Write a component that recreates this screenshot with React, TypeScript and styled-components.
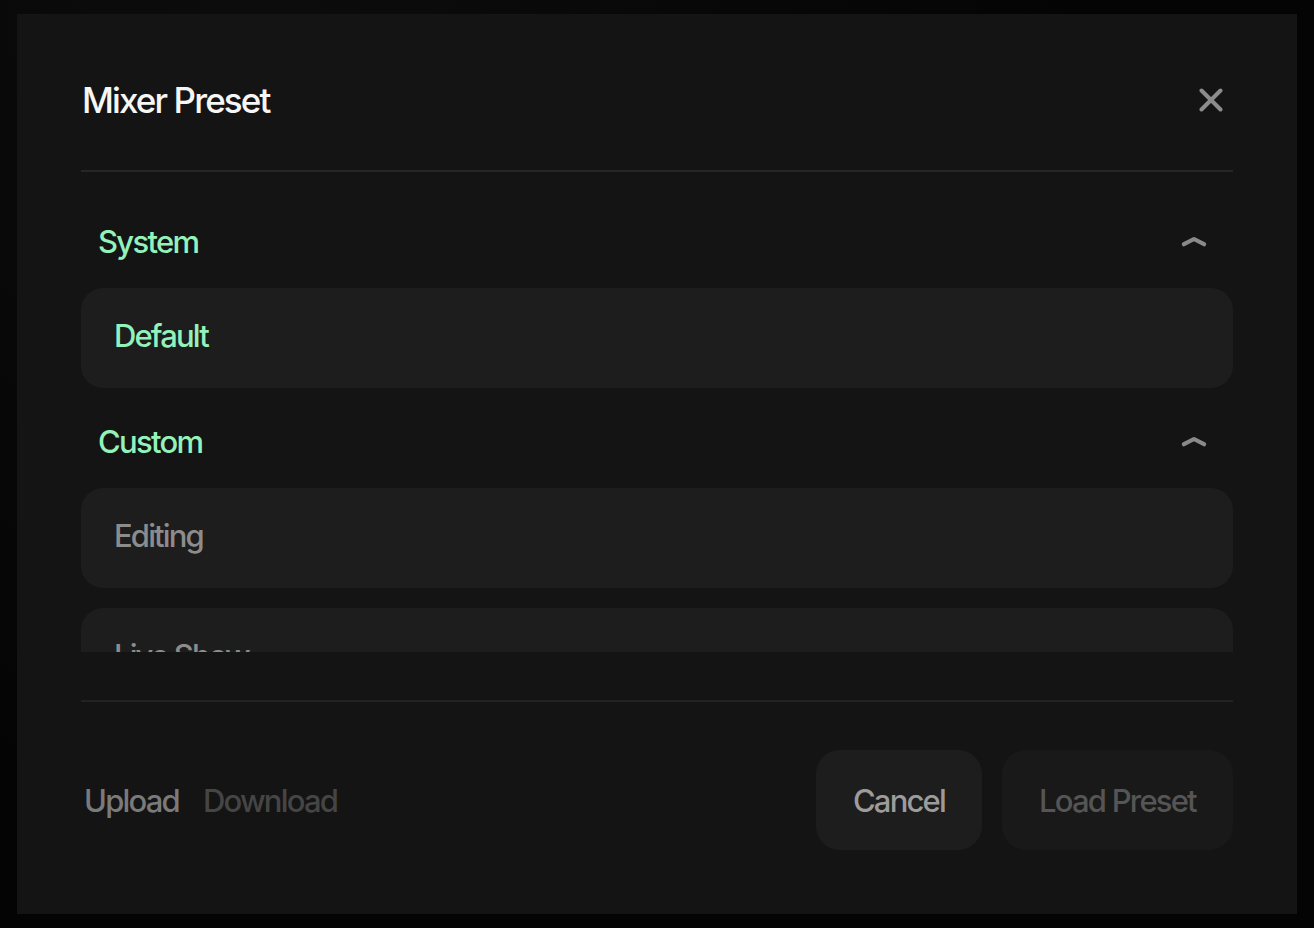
import styled, { createGlobalStyle } from "styled-components";

const GlobalStyle = createGlobalStyle`
  html, body {
    margin: 0;
    padding: 0;
    background: #050505;
    font-family: Inter, "Noto Sans", "Liberation Sans", sans-serif;
  }
  * { box-sizing: border-box; }
`;

type Preset = { name: string; active?: boolean };

const sections: { title: string; presets: Preset[] }[] = [
  { title: "System", presets: [{ name: "Default", active: true }] },
  { title: "Custom", presets: [{ name: "Editing" }, { name: "Live Show" }, { name: "Podcast" }] },
];

function CloseIcon() {
  return (
    <svg width="24" height="24" viewBox="0 0 24 24" fill="none">
      <path d="M2.5 2.5L21.5 21.5M21.5 2.5L2.5 21.5" stroke="#8c8c8c" strokeWidth="4" strokeLinecap="round" />
    </svg>
  );
}

function ChevronUp() {
  return (
    <svg width="26" height="11" viewBox="0 0 26 11" fill="none">
      <path d="M3 8.2L13 3L23 8.2" stroke="#8a8a8a" strokeWidth="4.2" strokeLinecap="round" strokeLinejoin="round" />
    </svg>
  );
}

export default function App() {
  return (
    <>
      <GlobalStyle />
      <Backdrop>
        <Dialog>
          <Header>
            <Title>Mixer Preset</Title>
            <IconButton aria-label="Close">
              <CloseIcon />
            </IconButton>
          </Header>

          <Body>
            <ScrollArea>
              {sections.map((section) => (
                <Section key={section.title}>
                  <SectionHeader>
                    <SectionTitle>{section.title}</SectionTitle>
                    <ChevronUp />
                  </SectionHeader>
                  <PresetList>
                    {section.presets.map((preset) => (
                      <PresetRow key={preset.name} $active={preset.active}>
                        {preset.name}
                      </PresetRow>
                    ))}
                  </PresetList>
                </Section>
              ))}
            </ScrollArea>
          </Body>

          <Footer>
            <FileActions>
              <TextButton $tone="#7a7a7a">Upload</TextButton>
              <TextButton $tone="#454545">Download</TextButton>
            </FileActions>
            <Actions>
              <Button $bg="#1d1d1d" $fg="#9c9c9c" $width={166}>
                Cancel
              </Button>
              <Button $bg="#191919" $fg="#555555" $width={231}>
                Load Preset
              </Button>
            </Actions>
          </Footer>
        </Dialog>
      </Backdrop>
    </>
  );
}

const Backdrop = styled.div`
  width: 1314px;
  height: 928px;
  padding: 14px 17px;
  background: radial-gradient(circle at 20% 0%, #0c0c0c 0%, #040404 60%);
`;

const Dialog = styled.div`
  width: 1280px;
  height: 900px;
  background: #141414;
  display: flex;
  flex-direction: column;
  padding: 0 64px;
`;

const Header = styled.div`
  display: flex;
  align-items: center;
  justify-content: space-between;
  padding: 56px 10px 40px 1px;
  border-bottom: 2px solid #262626;
`;

const Title = styled.h2`
  margin: 0;
  font-size: 35px;
  line-height: 60px;
  font-weight: 500;
  letter-spacing: -0.054em;
  color: #f6f6f6;
`;

const IconButton = styled.button`
  display: flex;
  padding: 0;
  border: none;
  background: none;
  cursor: pointer;
`;

const Body = styled.div`
  padding-bottom: 48px;
  border-bottom: 2px solid #222222;
`;

const ScrollArea = styled.div`
  height: 480px;
  overflow: hidden;
  padding-top: 26px;
  display: flex;
  flex-direction: column;
  gap: 10px;
`;

const Section = styled.div`
  display: flex;
  flex-direction: column;
`;

const SectionHeader = styled.div`
  height: 90px;
  display: flex;
  align-items: center;
  justify-content: space-between;
  padding: 0 26px 4px 17px;
`;

const SectionTitle = styled.span`
  font-size: 31px;
  font-weight: 500;
  letter-spacing: -0.055em;
  color: #93f2bb;
`;

const PresetList = styled.div`
  display: flex;
  flex-direction: column;
  gap: 20px;
`;

const PresetRow = styled.div<{ $active?: boolean }>`
  height: 100px;
  flex-shrink: 0;
  display: flex;
  align-items: center;
  padding: 0 33px 6px;
  border-radius: 22px;
  background: #1d1d1d;
  font-size: 31px;
  font-weight: 500;
  letter-spacing: -0.06em;
  color: ${(p) => (p.$active ? "#93f2bb" : "#8c8c8c")};
`;

const Footer = styled.div`
  display: flex;
  align-items: center;
  justify-content: space-between;
  padding: 48px 0 64px;
`;

const FileActions = styled.div`
  display: flex;
  align-items: center;
  gap: 24px;
  padding-left: 3px;
`;

const TextButton = styled.button<{ $tone: string }>`
  padding: 0;
  border: none;
  background: none;
  font-family: inherit;
  font-size: 31px;
  font-weight: 500;
  letter-spacing: -0.058em;
  color: ${(p) => p.$tone};
`;

const Actions = styled.div`
  display: flex;
  gap: 20px;
`;

const Button = styled.button<{ $bg: string; $fg: string; $width: number }>`
  width: ${(p) => p.$width}px;
  height: 100px;
  border: none;
  border-radius: 24px;
  background: ${(p) => p.$bg};
  color: ${(p) => p.$fg};
  font-family: inherit;
  font-size: 31px;
  font-weight: 500;
  letter-spacing: -0.058em;
`;
